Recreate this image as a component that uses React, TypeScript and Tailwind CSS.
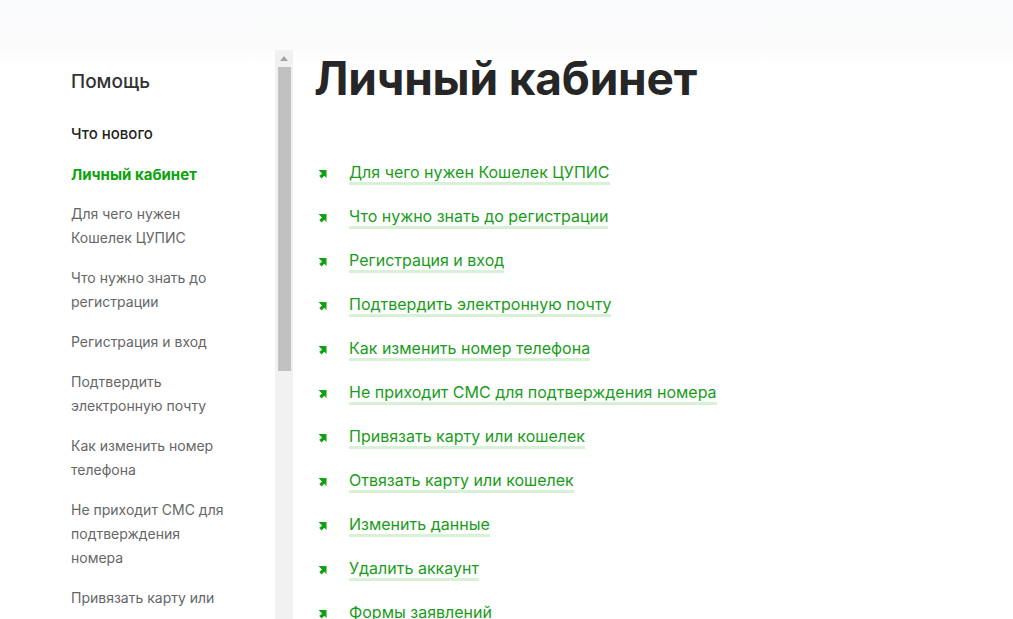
import React from 'react';

const sideItems = [
  'Для чего нужен Кошелек ЦУПИС',
  'Что нужно знать до регистрации',
  'Регистрация и вход',
  'Подтвердить электронную почту',
  'Как изменить номер телефона',
  'Не приходит СМС для подтверждения номера',
  'Привязать карту или кошелек',
  'Отвязать карту или кошелек',
  'Изменить данные',
  'Удалить аккаунт',
];

const links = [
  'Для чего нужен Кошелек ЦУПИС',
  'Что нужно знать до регистрации',
  'Регистрация и вход',
  'Подтвердить электронную почту',
  'Как изменить номер телефона',
  'Не приходит СМС для подтверждения номера',
  'Привязать карту или кошелек',
  'Отвязать карту или кошелек',
  'Изменить данные',
  'Удалить аккаунт',
  'Формы заявлений',
];

// green arrow bullet, chunky head pointing to the top right
const Arrow = () => (
  <svg width="10" height="10" viewBox="0 0 10 10" className="shrink-0">
    <path d="M1.5 1 H9.5 V9 L7.3 6.8 L4.6 9.4 L2.3 7.1 L5 4.5 Z" fill="#14a014" />
  </svg>
);

const Scrollbar = () => (
  <div className="w-[18px] shrink-0 bg-[#f1f1f1] flex flex-col items-center">
    <div className="h-[17px] flex items-center justify-center">
      <svg width="8" height="5" viewBox="0 0 8 5">
        <path d="M0 5 L4 0 L8 5 Z" fill="#a3a3a3" />
      </svg>
    </div>
    <div className="w-[13px] h-[304px] bg-[#c1c1c1]" />
  </div>
);

export default function App() {
  return (
    <div
      className="min-h-[619px] bg-[linear-gradient(#f9fafb_0px,#fbfbfc_50px,#ffffff_66px)] overflow-hidden"
      style={{ fontFamily: 'Inter, "Noto Sans", sans-serif' }}
    >
      <div className="flex pt-[50px]">
        <aside className="flex h-[569px] shrink-0">
          <nav className="w-[275px] overflow-hidden pl-[71px] pt-[18px]">
            <div className="text-[19px] leading-[28px] font-medium text-[#333]">Помощь</div>
            <div className="mt-[26px] flex flex-col gap-4">
              <div className="text-[15px] leading-[24px] font-medium text-[#222]">Что нового</div>
              <div className="text-[15px] leading-[24px] font-bold text-[#0da30d] translate-y-[1px]">
                Личный кабинет
              </div>
              {sideItems.map((t) => (
                <div key={t} className="w-[156px] text-[14px] leading-[24px] text-[#666]">
                  {t}
                </div>
              ))}
            </div>
          </nav>
          <Scrollbar />
        </aside>

        <main className="ml-[21px] flex-1">
          <h1 className="text-[46px] leading-[56px] font-bold text-[#262626] tracking-[-0.2px]">
            Личный кабинет
          </h1>
          <ul className="mt-[46px]">
            {links.map((t) => (
              <li key={t} className="h-[44px] flex items-center">
                <span className="w-[35px] pl-[3px] flex">
                  <Arrow />
                </span>
                <span className="text-[16px] leading-[19px] text-[#1a9c1a] border-b-[3px] border-[#d6f1d6]">
                  {t}
                </span>
              </li>
            ))}
          </ul>
        </main>
      </div>
    </div>
  );
}
